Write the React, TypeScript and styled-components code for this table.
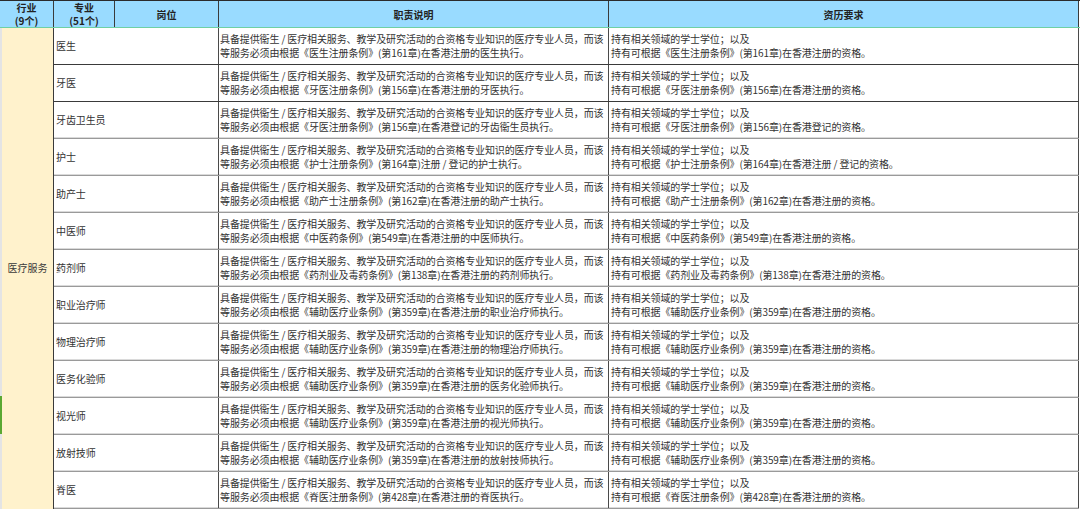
import styled, { createGlobalStyle } from "styled-components";

const GlobalStyle = createGlobalStyle`
  html, body {
    margin: 0;
    padding: 0;
    background: #ffffff;
  }
  * {
    box-sizing: border-box;
  }
`;

type Job = {
  name: string;
  law: string;
  chapter: number;
  doer: string;
  place: string;
};

const jobs: Job[] = [
  { name: "医生", law: "医生注册条例", chapter: 161, doer: "在香港注册的医生", place: "在香港注册" },
  { name: "牙医", law: "牙医注册条例", chapter: 156, doer: "在香港注册的牙医", place: "在香港注册" },
  { name: "牙齿卫生员", law: "牙医注册条例", chapter: 156, doer: "在香港登记的牙齿衞生员", place: "在香港登记" },
  { name: "护士", law: "护士注册条例", chapter: 164, doer: "注册 / 登记的护士", place: "在香港注册 / 登记" },
  { name: "助产士", law: "助产士注册条例", chapter: 162, doer: "在香港注册的助产士", place: "在香港注册" },
  { name: "中医师", law: "中医药条例", chapter: 549, doer: "在香港注册的中医师", place: "在香港注册" },
  { name: "药剂师", law: "药剂业及毒药条例", chapter: 138, doer: "在香港注册的药剂师", place: "在香港注册" },
  { name: "职业治疗师", law: "辅助医疗业条例", chapter: 359, doer: "在香港注册的职业治疗师", place: "在香港注册" },
  { name: "物理治疗师", law: "辅助医疗业条例", chapter: 359, doer: "在香港注册的物理治疗师", place: "在香港注册" },
  { name: "医务化验师", law: "辅助医疗业条例", chapter: 359, doer: "在香港注册的医务化验师", place: "在香港注册" },
  { name: "视光师", law: "辅助医疗业条例", chapter: 359, doer: "在香港注册的视光师", place: "在香港注册" },
  { name: "放射技师", law: "辅助医疗业条例", chapter: 359, doer: "在香港注册的放射技师", place: "在香港注册" },
  { name: "脊医", law: "脊医注册条例", chapter: 428, doer: "在香港注册的脊医", place: "在香港注册" },
];

const Sheet = styled.div`
  width: 1080px;
  height: 509px;
  overflow: hidden;
  display: flex;
  flex-direction: column;
  font-family: "Noto Sans CJK SC", "Noto Sans", "Liberation Sans", sans-serif;
  font-size: 10px;
  color: #333333;
  border-top: 1px solid #2b2b2b;
`;

const HeaderRow = styled.div`
  display: grid;
  grid-template-columns: 54px 61px 104px 390px 470px;
  height: 28px;
  border-bottom: 1px solid #6fd0a4;
`;

const HeadCell = styled.div`
  background: #99dbff;
  border-right: 1px solid #3a3a3a;
  display: flex;
  flex-direction: column;
  align-items: center;
  justify-content: center;
  font-weight: 700;
  line-height: 13px;
  color: #222222;
`;

const Body = styled.div`
  display: flex;
  flex: 1;
`;

const IndustryCell = styled.div`
  width: 54px;
  display: flex;
  border-right: 1px solid #3a3a3a;
`;

const Gutter = styled.div`
  width: 2px;
  background: #e4e4e4;
  padding-top: 368px;
`;

const Marker = styled.div`
  height: 38px;
  background: #5aa832;
`;

const IndustryName = styled.div`
  flex: 1;
  background: #fff2cc;
  display: flex;
  align-items: center;
  justify-content: center;
  color: #3a3a3a;
  padding-bottom: 2px;
`;

const Rows = styled.div`
  display: flex;
  flex-direction: column;
`;

const Row = styled.div<{ $strong: boolean }>`
  display: grid;
  grid-template-columns: 165px 390px 470px;
  height: 37px;
  background: #ffffff;
  border-bottom: 1px solid ${(p) => (p.$strong ? "#3a3a3a" : "#9a9a9a")};
  box-shadow: ${(p) => (p.$strong ? "none" : "inset 0 -1px 0 #dadada")};
`;

const Cell = styled.div<{ $pad: number }>`
  border-right: 1px solid #4a4a4a;
  padding-left: ${(p) => p.$pad}px;
  display: flex;
  flex-direction: column;
  justify-content: center;
  line-height: 14px;
  letter-spacing: -0.12px;
  white-space: nowrap;
  overflow: hidden;
`;

const App = () => {
  return (
    <>
      <GlobalStyle />
      <Sheet>
        <HeaderRow>
          <HeadCell>
            <span>行业</span>
            <span>(9个)</span>
          </HeadCell>
          <HeadCell>
            <span>专业</span>
            <span>(51个)</span>
          </HeadCell>
          <HeadCell>岗位</HeadCell>
          <HeadCell>职责说明</HeadCell>
          <HeadCell>资历要求</HeadCell>
        </HeaderRow>
        <Body>
          <IndustryCell>
            <Gutter>
              <Marker />
            </Gutter>
            <IndustryName>医疗服务</IndustryName>
          </IndustryCell>
          <Rows>
            {jobs.map((job, i) => (
              <Row key={job.name} $strong={i < 2}>
                <Cell $pad={2}>{job.name}</Cell>
                <Cell $pad={1}>
                  <span>具备提供衞生 / 医疗相关服务、教学及研究活动的合资格专业知识的医疗专业人员，而该</span>
                  <span>
                    等服务必须由根据《{job.law}》(第{job.chapter}章){job.doer}执行。
                  </span>
                </Cell>
                <Cell $pad={2}>
                  <span>持有相关领域的学士学位；以及</span>
                  <span>
                    持有可根据《{job.law}》(第{job.chapter}章){job.place}的资格。
                  </span>
                </Cell>
              </Row>
            ))}
          </Rows>
        </Body>
      </Sheet>
    </>
  );
};

export default App;
